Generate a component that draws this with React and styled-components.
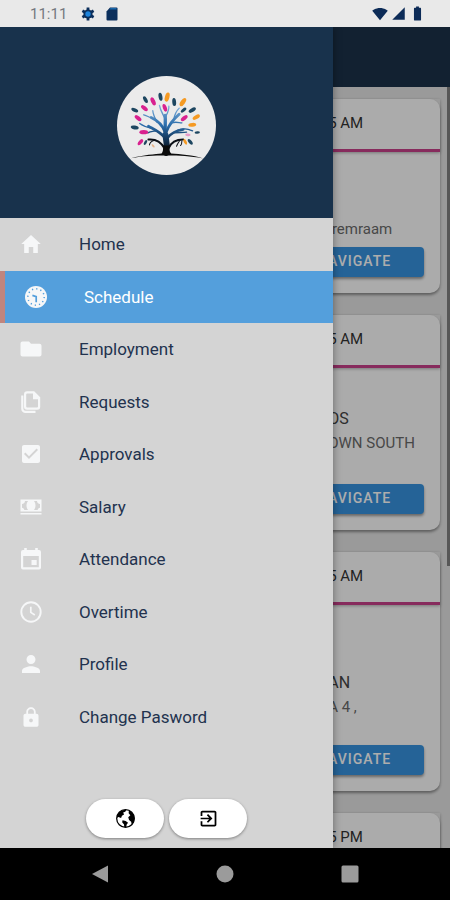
import React, { useState } from "react"
import styled, { createGlobalStyle } from "styled-components"
//icons
import { IoMdHome, IoMdFolder, IoMdCheckbox, IoMdCash, IoMdPerson, IoMdLock, IoMdExit } from "react-icons/io"
import { MdSignalWifi4Bar, MdSignalCellular4Bar, MdBatteryFull } from "react-icons/md"

const menuItems = [
  { label: "Home", icon: IoMdHome },
  { label: "Schedule", icon: ClockFace },
  { label: "Employment", icon: IoMdFolder },
  { label: "Requests", icon: PagesIcon },
  { label: "Approvals", icon: IoMdCheckbox },
  { label: "Salary", icon: IoMdCash },
  { label: "Attendance", icon: CalendarIcon },
  { label: "Overtime", icon: ClockOutline },
  { label: "Profile", icon: IoMdPerson },
  { label: "Change Pasword", icon: IoMdLock },
]

const visits = [
  { time: "5 AM", lines: ["\u00a0remraam"], top: 65, bottom: 6 },
  { time: "5 AM", title: "OS", lines: ["OWN SOUTH"], top: 39, bottom: 29 },
  { time: "5 AM", title: "AN", lines: ["A 4 ,"], top: 66, bottom: 26 },
  { time: "5 PM", lines: [] },
]

const NAVY = "#1d4660"
const PINK = "#d9218f"
const ORANGE = "#f59a23"

// cx, cy, angle, color, length
const leaves = [
  [137, 103, 60, NAVY, 11], [160, 108, 65, PINK, 13], [182, 94, 80, NAVY, 12],
  [202, 95, 105, ORANGE, 14], [223, 110, 85, NAVY, 12], [249, 110, -55, ORANGE, 14],
  [105, 134, 25, NAVY, 11], [134, 128, 38, PINK, 12], [195, 127, 70, PINK, 12],
  [251, 134, -40, NAVY, 10], [277, 134, -30, NAVY, 12], [115, 158, 38, PINK, 12],
  [253, 158, -38, PINK, 12], [289, 155, -30, ORANGE, 12], [105, 186, 10, NAVY, 12],
  [132, 200, 0, PINK, 13], [277, 178, -5, ORANGE, 12], [292, 201, -5, NAVY, 8],
  [264, 208, 5, "#e79ac9", 8], [122, 230, -50, PINK, 11], [137, 231, -60, NAVY, 8],
  [256, 229, 60, ORANGE, 9], [271, 229, 50, NAVY, 10], [160, 241, 50, "#e8b58c", 6],
]

function ClockFace() {
  return (
    <svg viewBox="0 0 24 24" aria-hidden="true">
      <circle cx="12" cy="12" r="11" fill="currentColor" />
      <circle cx="12" cy="12" r="8.2" fill="none" stroke="#549fdc" strokeWidth="1.5" strokeDasharray="1.2 3.09" />
      <path d="M8.4 10.4l3.8 1.2v5.6" fill="none" stroke="#549fdc" strokeWidth="1.7" />
    </svg>
  )
}

function ClockOutline() {
  return (
    <svg viewBox="0 0 24 24" fill="none" stroke="currentColor" aria-hidden="true">
      <circle cx="12" cy="12" r="9.7" strokeWidth="1.9" />
      <path d="M11.8 6.8v5.6l4 2.6" strokeWidth="1.7" />
    </svg>
  )
}

function PagesIcon() {
  return (
    <svg viewBox="0 0 24 24" aria-hidden="true">
      <path d="M3.3 5.5v13.2a3.2 3.2 0 0 0 3.2 3.2h10" fill="none" stroke="currentColor" strokeWidth="2.2" />
      <path
        fill="currentColor"
        fillRule="evenodd"
        d="M8 1.2h7.2l6 6v9.6a3 3 0 0 1-3 3H8a3 3 0 0 1-3-3V4.2a3 3 0 0 1 3-3zM8.2 3.4a1 1 0 0 0-1 1v12.2a1 1 0 0 0 1 1h9.8a1 1 0 0 0 1-1V9.2h-5V3.4z"
      />
    </svg>
  )
}

function CalendarIcon() {
  return (
    <svg viewBox="0 0 24 24" fill="currentColor" aria-hidden="true">
      <path
        fillRule="evenodd"
        d="M5.2 1h2.6v2h8.4V1h2.6v2H20a2 2 0 0 1 2 2v15.5a2 2 0 0 1-2 2H4a2 2 0 0 1-2-2V5a2 2 0 0 1 2-2h1.2zM4.2 9v11.3h15.6V9z"
      />
      <path d="M12.5 13h5.2v5h-5.2z" />
    </svg>
  )
}

function EarthIcon() {
  return (
    <svg viewBox="0 0 20 20" aria-hidden="true">
      <circle cx="10" cy="10" r="8.4" fill="none" stroke="#000000" strokeWidth="1.2" />
      <path d="M3 5.2C5 2.5 8 1.5 10.8 1.6L9.8 3.6 7.8 4.4 8.6 6.2 6.6 7.4 5.8 9.6 3.2 8.6 1.8 9.4C1.8 7.8 2.2 6.4 3 5.2z" />
      <path d="M13.2 2.4C16.4 3.6 18.6 6.6 18.5 10.2 18.4 12.6 17.6 14.6 16 16.2L15.4 13.2 13.4 11.4 12.6 8.8 14.6 6.8 13 5z" />
      <path d="M7.2 11.6L10.2 12.4 12.4 14 11 16 10.8 18.4 8.8 18.2 8.6 15.6 6.8 13.6z" />
    </svg>
  )
}

function GearIcon() {
  return (
    <svg viewBox="0 0 14 14" width="14" height="14" aria-hidden="true">
      <path d="M7 0.6v12.8M1.4 3.8l11.2 6.4M1.4 10.2l11.2-6.4" stroke="#0b2f5c" strokeWidth="2.8" />
      <circle cx="7" cy="7" r="4.6" fill="#0b2f5c" />
      <circle cx="7" cy="7" r="2.7" fill="#1c83dc" />
    </svg>
  )
}

function TreeLogo() {
  return (
    <Logo viewBox="52 32 296 296" role="img" aria-label="Tree logo">
      <defs>
        <linearGradient id="bark" gradientUnits="userSpaceOnUse" x1="0" y1="110" x2="0" y2="265">
          <stop offset="0" stopColor="#8fbce4" />
          <stop offset="0.45" stopColor="#2a6caa" />
          <stop offset="0.75" stopColor="#12304f" />
          <stop offset="1" stopColor="#060a10" />
        </linearGradient>
      </defs>
      <circle cx="200" cy="180" r="148" fill="#ebebeb" />
      <g fill="none" stroke="url(#bark)" strokeLinecap="round">
        <path strokeWidth="18" d="M199 262C202 240 200 222 197 208" />
        <path strokeWidth="10" d="M197 212C194 190 198 170 196 150" />
        <path strokeWidth="4" d="M196 160C190 146 182 138 179 120M196 156C202 144 208 136 207 122" />
        <path strokeWidth="8" d="M196 200C188 178 172 164 154 156" />
        <path strokeWidth="4" d="M172 170C164 156 160 148 159 136M158 158C148 156 140 150 132 148" />
        <path strokeWidth="8" d="M200 198C208 176 222 160 238 146" />
        <path strokeWidth="4" d="M222 162C224 146 232 134 238 128M216 172C228 168 238 172 246 172" />
        <path strokeWidth="8" d="M196 218C184 200 160 190 146 182" />
        <path strokeWidth="4" d="M160 190C146 186 134 184 120 174M170 196C156 198 150 198 144 202" />
        <path strokeWidth="8" d="M202 218C216 200 232 194 250 192" />
        <path strokeWidth="4" d="M230 196C248 186 262 190 278 196M222 202C238 200 248 202 260 200" />
      </g>
      <g fill="none" stroke="#0b0f16" strokeLinecap="round">
        <path strokeWidth="6" d="M194 248C184 230 168 220 146 222M206 248C214 230 230 222 250 222" />
        <path strokeWidth="3" d="M166 224C156 226 150 232 149 238M240 224C236 230 232 236 230 242M246 226C246 232 244 238 242 240" />
      </g>
      <path fill="#0b0b0b" d="M94 278C130 268 168 266 185 264C191 258 190 246 190 240H208C208 250 208 258 214 264C240 266 280 268 310 279C270 271 240 270 200 270C160 270 130 271 94 278Z" />
      {leaves.map(([x, y, angle, color, size]) => (
        <ellipse key={`${x}-${y}`} cx={x} cy={y} rx={size} ry={size * 0.48} fill={color} transform={`rotate(${angle} ${x} ${y})`} />
      ))}
    </Logo>
  )
}

function VisitCard({ visit }) {
  return (
    <Card>
      <CardHeader>{visit.time}</CardHeader>
      {visit.lines.length > 0 && (
        <>
          <CardBody $top={visit.top} $bottom={visit.bottom}>
            {visit.title && <VisitTitle>{visit.title}</VisitTitle>}
            {visit.lines.map((line) => (
              <VisitLine key={line}>{line}</VisitLine>
            ))}
          </CardBody>
          <NavigateButton type="button">NAVIGATE</NavigateButton>
        </>
      )}
    </Card>
  )
}

function App() {
  const [active, setActive] = useState("Schedule");

  return (
    <Screen>
      <GlobalStyle />
      <StatusBar>
        <Clock>11:11</Clock>
        <GearIcon />
        <SdCard viewBox="0 0 12 14" aria-hidden="true">
          <path d="M4 0.5h6.5a1 1 0 0 1 1 1v11a1 1 0 0 1-1 1h-9a1 1 0 0 1-1-1V4.5z" fill="#0b2f5c" />
          <path d="M4.5 1h6v1.6h-7z" fill="#1767ab" />
        </SdCard>
        <Signals>
          <MdSignalWifi4Bar size={16} />
          <MdSignalCellular4Bar size={15} />
          <MdBatteryFull size={17} />
        </Signals>
      </StatusBar>

      <Main>
        <Page>
          <PageHeader />
          <VisitList>
            {visits.map((visit, index) => (
              <VisitCard key={index} visit={visit} />
            ))}
            <ScrollThumb />
          </VisitList>
        </Page>
        <Scrim />

        <Drawer>
          <DrawerHeader>
            <TreeLogo />
          </DrawerHeader>
          <Menu>
            {menuItems.map(({ label, icon: Icon }) => (
              <MenuItem key={label}>
                <MenuLink href={`#${label}`} $active={active === label} onClick={() => setActive(label)}>
                  <Icon />
                  <span>{label}</span>
                </MenuLink>
              </MenuItem>
            ))}
          </Menu>
          <DrawerFooter>
            <RoundButton type="button" aria-label="Language"><EarthIcon /></RoundButton>
            <RoundButton type="button" aria-label="Log out"><IoMdExit /></RoundButton>
          </DrawerFooter>
        </Drawer>
      </Main>

      <SystemBar>
        <SystemButton type="button" aria-label="Back">
          <svg viewBox="0 0 18 18"><path d="M1 9L17 0.5v17z" /></svg>
        </SystemButton>
        <SystemButton type="button" aria-label="Home screen">
          <svg viewBox="0 0 18 18"><circle cx="9" cy="9" r="8.5" /></svg>
        </SystemButton>
        <SystemButton type="button" aria-label="Recent apps">
          <svg viewBox="0 0 18 18"><rect x="0.5" y="0.5" width="17" height="17" rx="1.5" /></svg>
        </SystemButton>
      </SystemBar>
    </Screen>
  );
}

export default App;

const GlobalStyle = createGlobalStyle`
  * {
    box-sizing: border-box;
  }
  body {
    margin: 0;
    font-family: Roboto, "Liberation Sans", sans-serif;
  }
  button {
    border: none;
    padding: 0;
    font-family: inherit;
  }
`;

const Screen = styled.div`
  display: flex;
  flex-direction: column;
  height: 100vh;
  overflow: hidden;
`;

const StatusBar = styled.header`
  display: flex;
  align-items: center;
  height: 27px;
  padding: 0 24px 0 30px;
  background-color: #e9e9e9;
`;

const Clock = styled.span`
  margin-right: 14px;
  font-size: 15px;
  color: #75797f;
`;

const SdCard = styled.svg`
  width: 12px;
  height: 14px;
  margin-left: 11px;
`;

const Signals = styled.div`
  display: flex;
  align-items: center;
  gap: 3px;
  margin-left: auto;
  color: #0c2b57;
`;

const Main = styled.main`
  position: relative;
  flex: 1;
  min-height: 0;
  overflow: hidden;
`;

const Page = styled.div`
  display: flex;
  flex-direction: column;
  height: 100%;
`;

const PageHeader = styled.div`
  flex: none;
  height: 60px;
  background-color: #1b3249;
`;

const VisitList = styled.section`
  position: relative;
  display: flex;
  flex-direction: column;
  flex: 1;
  gap: 22px;
  padding: 12px 10px 0;
  overflow: hidden;
  background-color: #e4e4e4;
`;

const ScrollThumb = styled.div`
  position: absolute;
  top: 0;
  right: 0;
  width: 3px;
  height: 63%;
  background-color: #808080;
`;

const Card = styled.article`
  flex: none;
  padding-bottom: 16px;
  border-radius: 10px;
  background-color: #fdfdfd;
  box-shadow: 0 2px 3px rgba(0, 0, 0, 0.4);
`;

const CardHeader = styled.div`
  padding: 13px 0 15px 74%;
  border-bottom: 3px solid #c7408a;
  font-size: 15px;
  line-height: 22px;
  color: #333333;
  box-shadow: 0 1px 3px rgba(0, 0, 0, 0.3);
`;

const CardBody = styled.div`
  padding: ${(props) => props.$top}px 0 ${(props) => props.$bottom}px 74%;
`;

const VisitTitle = styled.div`
  font-size: 16px;
  line-height: 24px;
  white-space: nowrap;
  color: #444444;
`;

const VisitLine = styled.div`
  font-size: 15px;
  line-height: 24px;
  white-space: nowrap;
  color: #6a6a6a;
`;

const NavigateButton = styled.button`
  display: block;
  width: 140px;
  height: 30px;
  margin: 0 16px 0 auto;
  padding-bottom: 2px;
  border-radius: 4px;
  background-color: #3793df;
  font-size: 14px;
  font-weight: 500;
  letter-spacing: 1px;
  color: #ffffff;
  box-shadow: 0 2px 3px rgba(0, 0, 0, 0.4);
`;

const Scrim = styled.div`
  position: absolute;
  inset: 0;
  background-color: rgba(0, 0, 0, 0.32);
`;

const Drawer = styled.aside`
  position: absolute;
  inset: 0 auto 0 0;
  display: flex;
  flex-direction: column;
  width: 74%;
  background-color: #d4d4d4;
  box-shadow: 0 0 8px rgba(0, 0, 0, 0.4);
`;

const DrawerHeader = styled.div`
  display: flex;
  justify-content: center;
  padding: 49px 0 43px;
  background-color: #18324c;
`;

const Logo = styled.svg`
  width: 99px;
  height: 99px;
`;

const Menu = styled.ul`
  display: grid;
  grid-auto-rows: 1fr;
  height: 525px;
  margin: 0;
  padding: 0;
  list-style: none;
`;

const MenuItem = styled.li`
  display: flex;
`;

const MenuLink = styled.a`
  display: flex;
  align-items: center;
  flex: 1;
  gap: 36px;
  padding-left: 19px;
  border-left: ${(props) => (props.$active ? "5px solid #c0857e" : "none")};
  background-color: ${(props) => (props.$active ? "#549fdc" : "transparent")};
  font-size: 17px;
  text-decoration: none;
  color: ${(props) => (props.$active ? "#ffffff" : "#22324e")};

  svg {
    width: 24px;
    height: 24px;
    color: #f6f7f8;
  }
`;

const DrawerFooter = styled.div`
  display: flex;
  justify-content: center;
  gap: 5px;
  margin-top: auto;
  padding-bottom: 10px;
`;

const RoundButton = styled.button`
  display: flex;
  align-items: center;
  justify-content: center;
  width: 78px;
  height: 39px;
  border-radius: 20px;
  background-color: #ffffff;
  color: #000000;
  box-shadow: 0 1px 3px rgba(0, 0, 0, 0.4);

  svg {
    width: 21px;
    height: 21px;
  }
`;

const SystemBar = styled.footer`
  display: flex;
  height: 52px;
  padding: 0 37px;
  background-color: #000000;
`;

const SystemButton = styled.button`
  display: flex;
  align-items: center;
  justify-content: center;
  flex: 1;
  background-color: transparent;

  svg {
    width: 18px;
    height: 18px;
    fill: #9b9b9b;
  }
`;
